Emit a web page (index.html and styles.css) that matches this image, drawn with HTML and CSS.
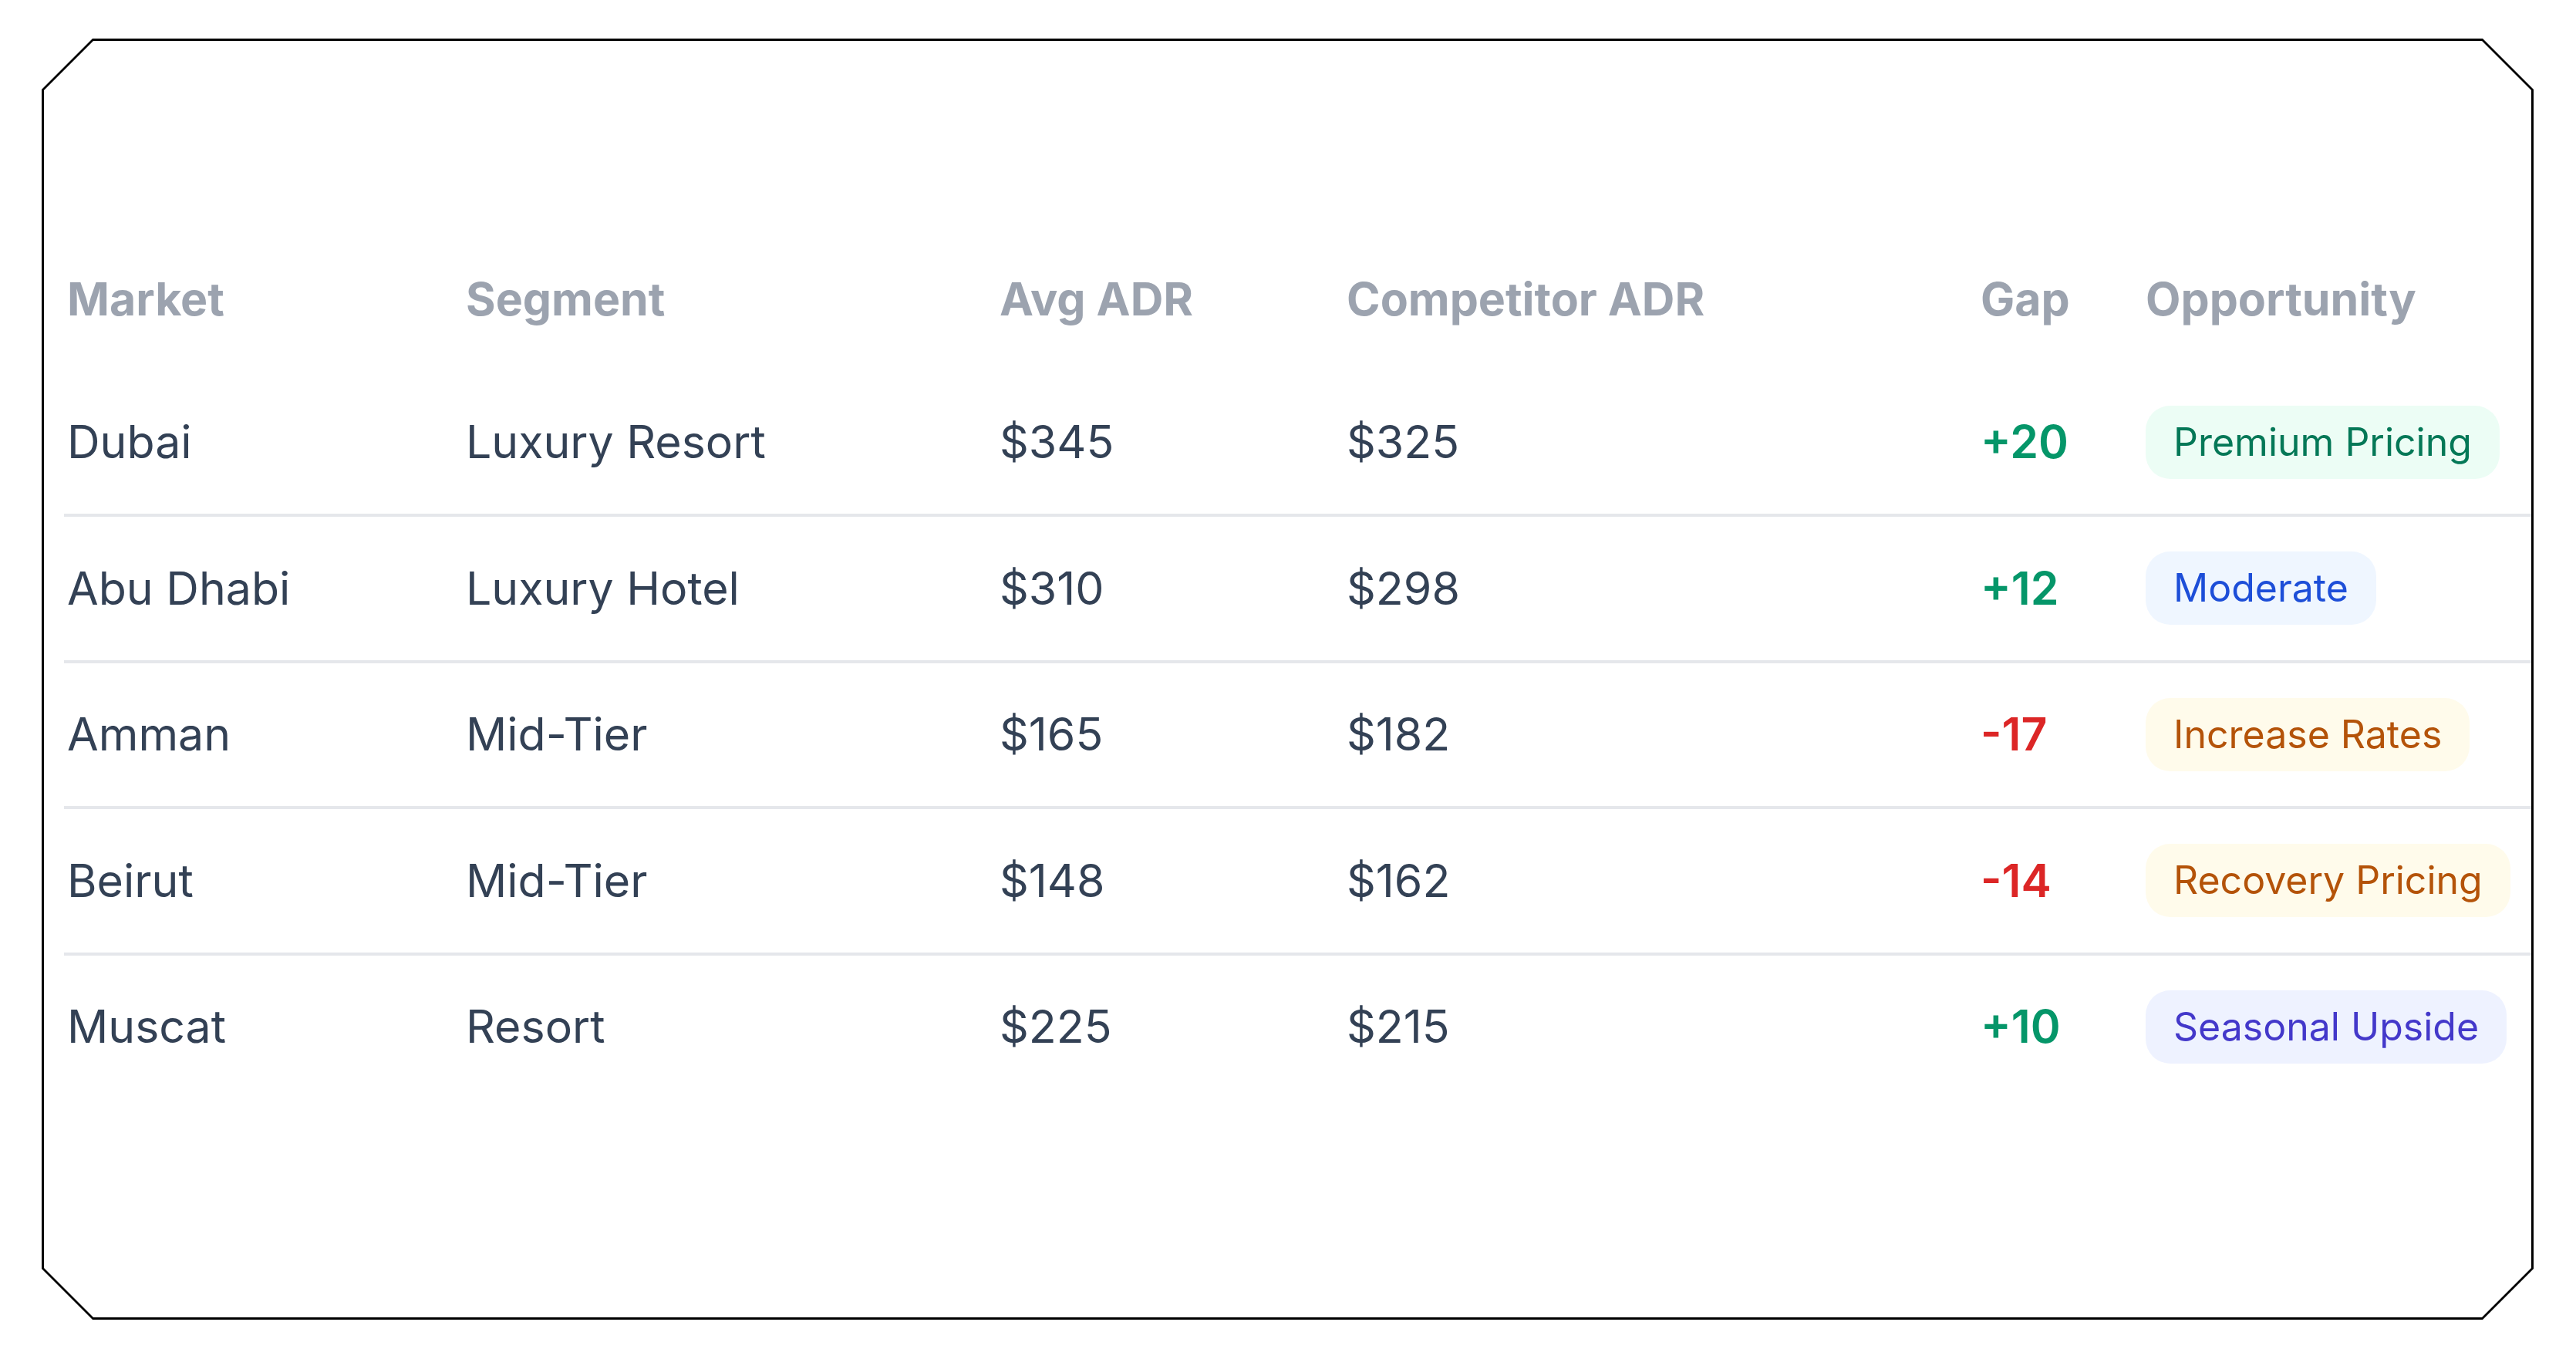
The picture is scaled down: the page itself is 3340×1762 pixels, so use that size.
FILE: index.html
```html
<!DOCTYPE html>
<html lang="en">
<head>
<meta charset="utf-8">
<title>ADR Comparison</title>
<link rel="stylesheet" href="styles.css">
</head>
<body>
<div class="page">
  <div class="frame">
    <div class="panel">
      <div class="table">
        <div class="row head">
          <div class="cell">Market</div>
          <div class="cell">Segment</div>
          <div class="cell">Avg ADR</div>
          <div class="cell">Competitor ADR</div>
          <div class="cell">Gap</div>
          <div class="cell">Opportunity</div>
        </div>
        <div class="row body">
          <div class="cell">Dubai</div>
          <div class="cell">Luxury Resort</div>
          <div class="cell">$345</div>
          <div class="cell">$325</div>
          <div class="cell gap pos">+20</div>
          <div class="cell"><span class="badge green">Premium Pricing</span></div>
        </div>
        <div class="row body">
          <div class="cell">Abu Dhabi</div>
          <div class="cell">Luxury Hotel</div>
          <div class="cell">$310</div>
          <div class="cell">$298</div>
          <div class="cell gap pos">+12</div>
          <div class="cell"><span class="badge blue">Moderate</span></div>
        </div>
        <div class="row body">
          <div class="cell">Amman</div>
          <div class="cell">Mid-Tier</div>
          <div class="cell">$165</div>
          <div class="cell">$182</div>
          <div class="cell gap neg">-17</div>
          <div class="cell"><span class="badge amber">Increase Rates</span></div>
        </div>
        <div class="row body">
          <div class="cell">Beirut</div>
          <div class="cell">Mid-Tier</div>
          <div class="cell">$148</div>
          <div class="cell">$162</div>
          <div class="cell gap neg">-14</div>
          <div class="cell"><span class="badge amber">Recovery Pricing</span></div>
        </div>
        <div class="row body last">
          <div class="cell">Muscat</div>
          <div class="cell">Resort</div>
          <div class="cell">$225</div>
          <div class="cell">$215</div>
          <div class="cell gap pos">+10</div>
          <div class="cell"><span class="badge indigo">Seasonal Upside</span></div>
        </div>
      </div>
    </div>
  </div>
</div>
</body>
</html>
```

FILE: styles.css
```css
html, body {
  margin: 0;
  padding: 0;
  background: #ffffff;
}

body {
  font-family: Inter, "Noto Sans", "Liberation Sans", sans-serif;
  color: #334155;
}

.page {
  width: 3340px;
  height: 1762px;
  box-sizing: border-box;
  padding: 50px 55px 51px 54px;
}

.frame {
  width: 100%;
  height: 100%;
  box-sizing: border-box;
  padding: 3px;
  background: #000000;
  clip-path: polygon(66px 0, calc(100% - 66px) 0, 100% 66px, 100% calc(100% - 66px), calc(100% - 66px) 100%, 66px 100%, 0 calc(100% - 66px), 0 66px);
}

.panel {
  width: 100%;
  height: 100%;
  box-sizing: border-box;
  background: #ffffff;
  padding: 300px 0 0 26px;
  overflow: hidden;
  clip-path: polygon(64px 0, calc(100% - 64px) 0, 100% 64px, 100% calc(100% - 64px), calc(100% - 64px) 100%, 64px 100%, 0 calc(100% - 64px), 0 64px);
}

.table {
  display: flex;
  flex-direction: column;
  width: 3200px;
}

.row {
  display: grid;
  grid-template-columns: 517px 692px 450px 822px 214px 505px;
  align-items: center;
}

.cell {
  padding-left: 4px;
  white-space: nowrap;
}

.head {
  font-size: 59px;
  font-weight: 700;
  color: #9ca3af;
  line-height: 70px;
  padding-bottom: 57.5px;
}

.body {
  font-size: 59px;
  line-height: 72px;
  height: 185.5px;
  border-bottom: 4px solid #e5e7eb;
}

.body.last {
  border-bottom: none;
}

.gap {
  font-weight: 600;
}

.gap.pos {
  color: #059669;
}

.gap.neg {
  color: #dc2626;
}

.badge {
  display: inline-block;
  font-size: 50px;
  line-height: 61px;
  padding: 17px 36px;
  border-radius: 32px;
}

.badge.green {
  background: #ecfdf5;
  color: #047857;
}

.badge.blue {
  background: #eff6ff;
  color: #1d4ed8;
}

.badge.amber {
  background: #fffbeb;
  color: #b45309;
}

.badge.indigo {
  background: #eef2ff;
  color: #4338ca;
}
```
